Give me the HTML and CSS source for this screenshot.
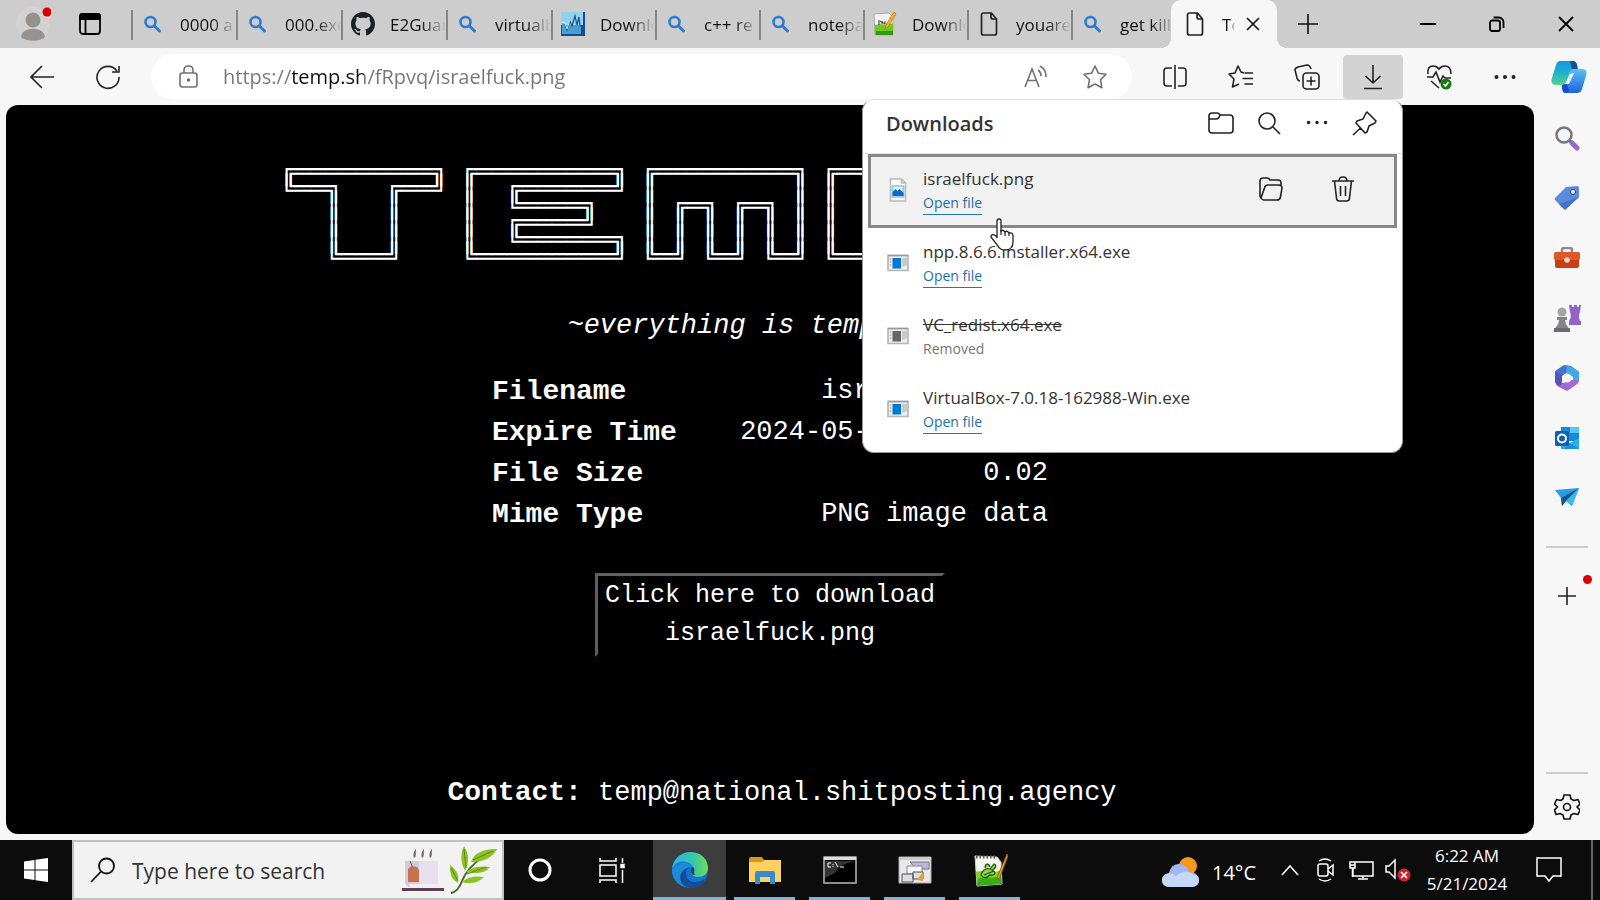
FILE: index.html
```html
<!DOCTYPE html>
<html lang="en">
<head>
    <meta charset="UTF-8">
    <title>Temp.sh</title>
    <link rel="stylesheet" href="styles.css">
</head>
<body>
    <!-- shared icons -->
    <svg class="sprite" aria-hidden="true">
        <symbol id="find" viewBox="0 0 24 24"><circle cx="9.500" cy="10" r="5" fill="none" stroke="#2b7cd0" stroke-width="2.600"/><path d="M13.500 14l5 5" stroke="#2b7cd0" stroke-width="3" stroke-linecap="round"/></symbol>
        <symbol id="doc" viewBox="0 0 24 24"><path d="M5.500 1h8l5 6v14a2 2 0 0 1-2 2h-11a2 2 0 0 1-2-2V3a2 2 0 0 1 2-2zM13 1v4a2 2 0 0 0 2 2h4" transform="translate(1)" fill="none" stroke="#222" stroke-width="1.700"/></symbol>
        <symbol id="exe" viewBox="0 0 22 18"><path d="M1 1.500h20v15H1z" fill="#eee" stroke="#b5b5b5"/><path d="M1 1.500h20" stroke="#999" stroke-width="1.500"/><path d="M5.500 4h8.500v10.500H5.500z" fill="currentColor"/><path d="M15 4h5v7l-5 2z" fill="#c9c9c9"/><path d="M2.500 5h2M2.500 8h2M2.500 11h2" stroke="#bbb"/></symbol>
        <symbol id="npp" viewBox="0 0 36 36"><path d="M3 4l22 1 4 5 1 22-25 2z" fill="#f5f8ef" stroke="#ccc"/><path d="M4 20c8-3 14 3 25-2l1 14-25 2z" fill="#7ed321"/><path d="M6 27c8-4 13 1 23-3l1 8-25 2z" fill="#3bab1c"/><path d="M4 5h21" stroke="#555" stroke-width="3" stroke-dasharray="1.500 2"/><path d="M9 23c2-6 5-7 9-6l4-5c3 1 2 5-2 6 5 2 3 6-2 5-4 4-7 3-9 0zM13 16c0-5 4-5 5-1M12 23l10-4" fill="#95cf39" stroke="#19501c" stroke-width="1.200"/><path d="M35 2l1 2-8 21-3 3 1-5z" fill="#e79a23" stroke="#8a5a20" stroke-width=".8"/></symbol>
    </svg>

    <header class="tab-strip">
        <button class="profile" aria-label="Profile">
            <svg width="36" height="36" viewBox="0 0 36 36"><circle cx="18" cy="18" r="17" fill="#d3d2d0"/><circle cx="18" cy="14" r="7.500" fill="#96928f"/><path d="M6 31c1-11 23-11 24 0-5 5-19 5-24 0z" fill="#96928f"/><circle cx="32" cy="6" r="4.500" fill="#d90000"/></svg>
        </button>
        <button class="workspace" aria-label="Tab actions">
            <svg width="24" height="24" viewBox="0 0 24 24" fill="none" stroke="#000" stroke-width="1.800"><rect x="2" y="2" width="20" height="20" rx="3"/><path d="M2 7V4q0-2 2-2h16q2 0 2 2v3z" fill="#000"/><path d="M7.500 7v15"/></svg>
        </button>
        <nav class="tabs" aria-label="Tabs">
            <button class="tab wide"><svg class="favicon"><use href="#find"/></svg><span>0000 a</span></button>
            <button class="tab wide"><svg class="favicon"><use href="#find"/></svg><span>000.exe</span></button>
            <button class="tab wide"><svg class="favicon" viewBox="0 0 16 16"><path fill="#1b1f23" d="M8 0C3.580 0 0 3.580 0 8c0 3.540 2.290 6.530 5.470 7.590.4.070.55-.17.55-.38 0-.19-.01-.82-.01-1.490-2.010.37-2.530-.49-2.690-.94-.09-.23-.48-.94-.82-1.130-.28-.15-.68-.52-.01-.53.63-.01 1.080.58 1.230.82.72 1.210 1.870.87 2.330.66.07-.52.28-.87.51-1.070-1.780-.2-3.640-.89-3.640-3.950 0-.87.31-1.590.82-2.150-.08-.2-.36-1.020.08-2.120 0 0 .67-.21 2.200.82.64-.18 1.320-.27 2-.27s1.360.09 2 .27c1.530-1.040 2.200-.82 2.200-.82.44 1.100.16 1.920.08 2.120.51.56.82 1.270.82 2.150 0 3.070-1.870 3.750-3.650 3.950.29.25.54.73.54 1.480 0 1.070-.01 1.930-.01 2.200 0 .21.15.46.55.38A8 8 0 0 0 16 8c0-4.420-3.580-8-8-8z"/></svg><span>E2Guar</span></button>
            <button class="tab wide"><svg class="favicon"><use href="#find"/></svg><span>virtualb</span></button>
            <button class="tab"><svg class="favicon" viewBox="0 0 24 24"><path fill="#174d8d" d="M0 0h24v24H0z"/><path fill="#8fd3ec" d="M0 0h22v13H0z"/><path fill="#46a0d6" d="M1 13h19v9H1z"/><path d="M1 12h3l2 6 3-9 2 5 3-10 2 9 2-8 1 9h4" fill="none" stroke="#1c5582" stroke-width="1.200"/><path d="M1 11h3l2 6 3-9" fill="none" stroke="#eaffff" stroke-width=".8"/></svg><span>Downlo</span></button>
            <button class="tab"><svg class="favicon"><use href="#find"/></svg><span>c++ re</span></button>
            <button class="tab"><svg class="favicon"><use href="#find"/></svg><span>notepad</span></button>
            <button class="tab"><svg class="favicon" viewBox="0 0 24 24"><path d="M1 2l15-1 4 4v18H2z" fill="#f5f7ef" stroke="#aaa"/><path d="M2 13c6-2 10 1 18-2v12H2z" fill="#72c91e"/><path d="M3 19h17v4H3z" fill="#35981d"/><path d="M6 8v5M9 9v3M12 9v3M7 9l5 3" stroke="#333"/><path d="M21 0l2 2-8 13-3 2 1-4z" fill="#efb62c" stroke="#bf6f29" stroke-width=".8"/></svg><span>Downlo</span></button>
            <button class="tab"><svg class="favicon"><use href="#doc"/></svg><span>youare</span></button>
            <button class="tab"><svg class="favicon"><use href="#find"/></svg><span>get kill</span></button>
            <div class="tab active">
                <svg class="favicon"><use href="#doc"/></svg><span>Te</span>
                <button class="close-tab" aria-label="Close tab"><svg width="14" height="14" viewBox="0 0 14 14" stroke="#111" stroke-width="1.600"><path d="M1 1l12 12M13 1L1 13"/></svg></button>
            </div>
        </nav>
        <button class="new-tab" aria-label="New tab"><svg width="22" height="22" viewBox="0 0 22 22" stroke="#111" stroke-width="1.600"><path d="M11 1v20M1 11h20"/></svg></button>
        <div class="window-controls">
            <button aria-label="Minimize"><svg width="16" height="16" viewBox="0 0 16 16" stroke="#000" stroke-width="2"><path d="M0 8h16"/></svg></button>
            <button aria-label="Restore"><svg width="16" height="16" viewBox="0 0 16 16" fill="none" stroke="#000" stroke-width="1.800"><rect x="1" y="4.500" width="10" height="10.500" rx="2"/><path d="M4.500 1.500H10a5 5 0 0 1 4.500 5V12"/></svg></button>
            <button aria-label="Close"><svg width="16" height="16" viewBox="0 0 16 16" stroke="#000" stroke-width="1.800"><path d="M1 1l14 14M15 1L1 15"/></svg></button>
        </div>
    </header>

    <div class="toolbar">
        <button class="tool" aria-label="Back"><svg width="24" height="24" viewBox="0 0 24 24"><path d="M24 12H1M12 1L1 12l11 11"/></svg></button>
        <button class="tool" aria-label="Refresh"><svg width="26" height="26" viewBox="0 0 26 26"><path d="M22 7A11 11 0 1 0 24 13M24 2v6h-7"/></svg></button>
        <div class="address-bar">
            <svg class="lock" width="20" height="24" viewBox="0 0 20 24"><rect x="1" y="8" width="17" height="14" rx="2.500"/><path d="M5 8V5q0-4 4.500-4T14 5v3"/><circle cx="9.500" cy="15" r="1" fill="#666"/></svg>
            <input class="url" type="text" aria-label="Address" value="https://temp.sh/fRpvq/israelfuck.png">
            <button aria-label="Read aloud"><svg width="24" height="24" viewBox="0 0 24 24"><path d="M1 22L8 4l7 18M3.500 15.500h9M14 5q3 2 3 6M16 1q6 3 6 11"/></svg></button>
            <button aria-label="Add to favorites"><svg width="26" height="26" viewBox="0 0 26 26"><path d="M13 2l3.400 7.200 7.600 1-5.500 5.500 1.400 8L13 20l-6.900 3.700 1.400-8L2 10.200l7.600-1z" stroke-linejoin="round"/></svg></button>
        </div>
        <button class="tool" aria-label="Split screen"><svg width="24" height="24" viewBox="0 0 24 24"><path d="M12 0v24M9 3H4Q1 3 1 6v12q0 3 3 3h5M15 3h5q3 0 3 3v12q0 3-3 3h-5"/></svg></button>
        <button class="tool" aria-label="Favorites"><svg width="26" height="26" viewBox="0 0 26 26"><path d="M16 9l-3-1-3-6-3 7-6 1 5 5-1.500 8L11 20M16.500 9H25M14.500 14.500H25M16.500 20H25" stroke-linejoin="round"/></svg></button>
        <button class="tool" aria-label="Collections"><svg width="26" height="26" viewBox="0 0 26 26"><rect x="9" y="9" width="16" height="16" rx="3.500"/><path d="M17 12.500v9M12.500 17h9M6 17q-2 0-3-3L1 6q0-2 3-3l9-2q3 0 4 4"/></svg></button>
        <div class="downloads">
            <button class="downloads-button" aria-label="Downloads"><svg width="20" height="26" viewBox="0 0 20 26"><path d="M10 1v18M2.500 12l7.500 7 7.500-7M1 24.500h18"/></svg></button>

            <section class="popup">
                <div class="popup-header">
                    <h2>Downloads</h2>
                    <button aria-label="Open downloads folder"><svg width="26" height="24" viewBox="0 0 26 24"><path d="M1 19V5q0-3 3-3h5q2 0 3 2h10q3 0 3 3v12q0 3-3 3H4q-3 0-3-3zM1 8h7q3 0 4-4"/></svg></button>
                    <button aria-label="Search downloads"><svg width="24" height="24" viewBox="0 0 24 24"><circle cx="10" cy="10" r="8"/><path d="M16 16l7 7"/></svg></button>
                    <button aria-label="More options"><svg width="24" height="24" viewBox="0 0 24 24"><path d="M3.500 11.500h.01M12 11.500h.01M20.500 11.500h.01" stroke-width="3.500" stroke-linecap="round"/></svg></button>
                    <button aria-label="Pin"><svg width="26" height="26" viewBox="0 0 26 26"><path d="M15 2l9 9-1 2-6 3-2 6-2 1L4 13l1-2 6-2 3-6zM8.500 18L1 25" stroke-linejoin="round"/></svg></button>
                </div>
                <ul class="file-list">
                    <li class="file selected">
                        <svg class="file-icon" width="22" height="24" viewBox="0 0 22 24"><path d="M3.500 1h11l4 4v18h-15z" fill="#fafafa" stroke="#bbb"/><path d="M14.500 1v4h4" fill="none" stroke="#bbb"/><path d="M5.500 8h11v11h-11z" fill="#dff3ff" stroke="#8bc5e8"/><path d="M5.500 18v-4l3-3 2 2 2-2 4 4v3z" fill="#0b6bc6"/></svg>
                        <div class="file-text"><span class="name">israelfuck.png</span><a href="#">Open file</a></div>
                        <button aria-label="Show in folder"><svg width="26" height="26" viewBox="0 0 26 26"><path d="M3 22Q2 21 2 20V5q0-3 3-3h4q2 0 3 2h8q3 0 3 3v2M3 22q1 2 3 2h13q3 0 3.500-3L24 12q0-3-3-3H10Q7 9 6.500 12z"/></svg></button>
                        <button aria-label="Delete file"><svg width="24" height="26" viewBox="0 0 24 26"><path d="M1 5h22M8 5q0-4 4-4t4 4M3.500 5l2 17q0 3 3 3h7q3 0 3-3l2-17M9.500 10v10M14.500 10v10"/></svg></button>
                    </li>
                    <li class="file">
                        <svg class="file-icon" width="22" height="18"><use href="#exe"/></svg>
                        <div class="file-text"><span class="name">npp.8.6.6.Installer.x64.exe</span><a href="#">Open file</a></div>
                    </li>
                    <li class="file removed">
                        <svg class="file-icon" width="22" height="18"><use href="#exe"/></svg>
                        <div class="file-text"><span class="name">VC_redist.x64.exe</span><span class="state">Removed</span></div>
                    </li>
                    <li class="file">
                        <svg class="file-icon" width="22" height="18"><use href="#exe"/></svg>
                        <div class="file-text"><span class="name">VirtualBox-7.0.18-162988-Win.exe</span><a href="#">Open file</a></div>
                    </li>
                </ul>
                <svg class="cursor" width="26" height="34" viewBox="0 0 26 34"><path d="M8 20V3q0-2 2-2t2 2v10q2-2 4 1 2-2 4 1 4-1 4 3v6q0 8-8 8-5 0-7-4l-7-9q0-4 5-1z" fill="#fff" stroke="#222" stroke-width="1.300"/><path d="M12 12v5M16 13v5M20 14v4" stroke="#222" stroke-width="1.200"/></svg>
            </section>
        </div>
        <button class="tool" aria-label="Browser essentials"><svg width="26" height="26" viewBox="0 0 26 26"><path d="M2 10Q1 2 7 2q4 0 6 3 2-3 6-3 6 0 6 8M1 13h6l3-5 4 10 3-6 2 2h6M5 17l8 7"/><circle cx="20" cy="20" r="5.500" fill="#107c10" stroke="none"/><path d="M17.500 20l2 2 3-4" stroke="#fff"/></svg></button>
        <button class="tool" aria-label="Settings and more"><svg width="24" height="24" viewBox="0 0 24 24"><path d="M3.500 12h.01M12 12h.01M20.500 12h.01" stroke-width="4" stroke-linecap="round"/></svg></button>
        <button class="copilot" aria-label="Copilot">
            <svg width="36" height="34" viewBox="0 0 36 34"><defs><linearGradient id="cp1" x2="0" y2="1"><stop stop-color="#1496dd"/><stop offset=".5" stop-color="#19b3cf"/><stop offset="1" stop-color="#5fd18c"/></linearGradient><linearGradient id="cp2" x2="0" y2="1"><stop stop-color="#5cc0f6"/><stop offset="1" stop-color="#1e63e0"/></linearGradient></defs><path d="M9 1h13q3 0 4 4l1 5h-5q-3 0-4 4l-3 9q-1 2-4 2H5q-6 0-4-7L5 5q1-4 4-4z" fill="url(#cp1)"/><path d="M19 1h3q3 0 4 4l1 5h-6z" fill="#174f93"/><path d="M27 9h4q6 0 4 7l-4 13q-1 4-5 4H14q-3 0-3-8 3 0 4-2l4-12q1-2 3-2z" fill="url(#cp2)"/><path d="M11 25q3 0 4-2l3 7q-1 3-4 3-3-1-3-8z" fill="#1b48cf"/><path d="M19 14l4-1-5 11h-4z" fill="#f2fbff"/></svg>
        </button>
    </div>

    <div class="content">
        <main class="page">
<pre class="wordmark" aria-label="TEMP">
╔═════════╗ ╔═════════╗ ╔═════════╗ ╔═════════╗
╚══╗   ╔══╝ ║  ╔══════╝ ║         ║ ║  ╔═══╗  ║
   ║   ║    ║  ╚════╗   ║ ╔═╗ ╔═╗ ║ ║  ╚═══╝  ║
   ║   ║    ║  ╔════╝   ║ ║ ║ ║ ║ ║ ║  ╔══════╝
   ║   ║    ║  ╚══════╗ ║ ║ ║ ║ ║ ║ ║  ║
   ╚═══╝    ╚═════════╝ ╚═╝ ╚═╝ ╚═╝ ╚══╝
</pre>
            <p class="tagline">~everything is temporary~</p>
            <table class="info">
                <tr><th scope="row">Filename</th><td>israelfuck.png</td></tr>
                <tr><th scope="row">Expire Time</th><td>2024-05-24 13:22:00</td></tr>
                <tr><th scope="row">File Size</th><td>0.02</td></tr>
                <tr><th scope="row">Mime Type</th><td>PNG image data</td></tr>
            </table>
            <button class="download">Click here to download<br>israelfuck.png</button>
            <p class="contact"><b>Contact:</b> temp@national.shitposting.agency</p>
        </main>

        <aside class="sidebar">
            <button aria-label="Search"><svg width="26" height="26" viewBox="0 0 26 26"><circle cx="10" cy="10" r="7.500" fill="#f2f5f6" stroke="#77777a" stroke-width="2.500"/><path d="M15.500 15.500l3 3" stroke="#777" stroke-width="3"/><path d="M18 18l5 5" stroke="#9268cb" stroke-width="5" stroke-linecap="round"/></svg></button>
            <button aria-label="Shopping"><svg width="26" height="26" viewBox="0 0 26 26"><path d="M12 2l11-1q2 0 2 2v9L12 24q-1 1-2 0l-9-9q-1-1 0-2z" fill="#5b8ade"/><path d="M25 12L12 24q-1 1-2 0l-5-5z" fill="#456fd0"/><circle cx="19" cy="7" r="2.600" fill="#eef" stroke="#234d8f"/></svg></button>
            <button aria-label="Tools"><svg width="28" height="22" viewBox="0 0 28 22"><path d="M9 6V3q0-2 2-2h6q2 0 2 2v3" fill="none" stroke="#8b8b8d" stroke-width="2.500"/><rect x="1" y="5" width="26" height="8" rx="1.500" fill="#df5726"/><path d="M2 13h24v6q0 2-2 2H4q-2 0-2-2z" fill="#c73f13"/><circle cx="14" cy="13" r="2.800" fill="#f5d6c9"/></svg></button>
            <button aria-label="Games"><svg width="28" height="28" viewBox="0 0 28 28"><path d="M16 1h3v2h2V1h3v2h2V1h2l-1 7q-2 3 0 9h1v4H16v-4q3-4 1-9z" fill="#9463c9"/><circle cx="9" cy="8" r="4.500" fill="#a5a5a7"/><path d="M4 13h10v3h-2q0 4 3 7 3 4 2 5H1q-1-2 2-5 3-3 3-7H4z" fill="#858587"/><path d="M1 24h16v4H1z" fill="#6b6b6e"/></svg></button>
            <button aria-label="Microsoft 365"><svg width="26" height="28" viewBox="0 0 26 28"><path d="M10 1l7 1 8 6v9l-5 3-1-8-6-3-5 3-2 9-5-4V7z" fill="#4d70cf"/><path d="M13 1l11 6q2 5 1 10l-6 2v-6l-7-4z" fill="#40a8e6"/><path d="M1 17l8 2 9-3 7 0q0 3-3 5l-9 6-8-4q-4-2-4-6z" fill="#a16bd2"/><path d="M1 8l7 3v8l-2 3q-5-2-5-6z" fill="#5656b9"/><circle cx="13" cy="14" r="4.500" fill="#f7f7f7"/></svg></button>
            <button aria-label="Outlook"><svg width="26" height="24" viewBox="0 0 26 24"><path d="M7 1h18v14H7z" fill="#1689d8"/><path d="M16 1h9v6h-9z" fill="#50c7f5"/><path d="M7 12l9 5 9-5v11H7z" fill="#2cafe8"/><path d="M16 17l9 6H10z" fill="#1491db"/><rect x="1" y="5" width="14" height="15" rx="1.500" fill="#0f5fb5"/><circle cx="8" cy="12.500" r="4" fill="none" stroke="#fff" stroke-width="2"/></svg></button>
            <button aria-label="Drop"><svg width="26" height="22" viewBox="0 0 26 22"><path d="M1 3l24-2-7 18-6-5-4 5-1-8z" fill="#25a0e5"/><path d="M7 11L25 1 12 14l-4 5z" fill="#14578e"/><path d="M12 14L25 1l-7 18z" fill="#3cb7ef"/></svg></button>
            <button class="add" aria-label="Customize"><svg width="20" height="20" viewBox="0 0 20 20" stroke="#222" stroke-width="1.600"><path d="M10 1v18M1 10h18"/></svg><i class="dot"></i></button>
            <button class="settings" aria-label="Settings"><svg width="26" height="28" viewBox="0 0 26 28" fill="none" stroke="#111" stroke-width="1.600" stroke-linejoin="round"><path d="M10 2h6l1 4 3 1.500 4-1 2 4.500-3 3 3 3-2 4.500-4-1-3 1.500-1 4h-6l-1-4-3-1.500-4 1L0.500 17l3-3-3-3L2.500 6.500l4 1L9 6z"/><circle cx="13" cy="14" r="3.500"/></svg></button>
        </aside>
    </div>

    <footer class="taskbar">
        <button class="start" aria-label="Start"><svg width="24" height="24" viewBox="0 0 24 24" fill="#fff"><path d="M0 3.500l10.500-1.500v9.500H0zM11.500 1.800L24 0v11.500H11.500zM0 12.500h10.500V22L0 20.500zM11.500 12.500H24V24l-12.500-1.800z"/></svg></button>
        <div class="search-box">
            <svg width="26" height="26" viewBox="0 0 26 26" fill="none" stroke="#111" stroke-width="1.800"><circle cx="16.500" cy="9" r="7.500"/><path d="M11 14.500L1 25"/></svg>
            <input type="text" aria-label="Search" placeholder="Type here to search">
            <svg class="art" width="96" height="52" viewBox="0 0 96 52"><path d="M12 14q-2-5 2-9v5q0 3-2 4zM20 14q-2-5 2-9v5q0 3-2 4zM28 14q-2-5 2-9v5q0 3-2 4z" fill="#777"/><path d="M3 17h33v21q0 5-5 5H10q-7 0-7-5z" fill="#e8dfee"/><path d="M3 17h14v26h-7q-7 0-7-5z" fill="#d3cadb"/><path d="M8 17l3 7" stroke="#754c3d"/><path d="M6 25l3-3 6 1 2 3v12H6z" fill="#c5734e"/><path d="M6 40h30l-3 4H10z" fill="#f3edf7"/><path d="M0 44h42v3H0z" fill="#5c4250"/><path d="M49 49q7-1 11-12 5-13 22-25" fill="none" stroke="#4b6925" stroke-width="2"/><path d="M62 2q8 12 1 25-7-13-1-25zM69 18q4-13 26-13-7 13-26 13zM48 21q10 6 8 18-9-4-8-18zM64 28q8-7 24-5-7 9-24 5zM60 38q8-7 22-5-9 9-22 5z" fill="#8cc322"/><path d="M62 5l2 19M71 16l20-9M49 24l7 13M65 30l19-7" stroke="#5d8f22" stroke-width="1.200"/></svg>
        </div>
        <button class="plain" aria-label="Cortana"><svg width="26" height="26" viewBox="0 0 26 26" fill="none" stroke="#fff" stroke-width="3"><circle cx="13" cy="13" r="10"/></svg></button>
        <button class="plain" aria-label="Task view"><svg width="26" height="26" viewBox="0 0 26 26" fill="none" stroke="#fff" stroke-width="1.500"><path d="M1 8h16v11H1zM1 1v3h16V1M1 26v-3h16v3M23.500 1v5M23.500 13v13"/><path d="M22 7.500h3v3h-3z" fill="#fff"/></svg></button>
        <button class="app current" aria-label="Edge"><svg width="36" height="36" viewBox="0 0 36 36"><defs><linearGradient id="e1"><stop stop-color="#2bb6e6"/><stop offset=".6" stop-color="#35c9a6"/><stop offset="1" stop-color="#70dc57"/></linearGradient></defs><circle cx="18" cy="18" r="18" fill="#1473cf"/><path d="M0 17C2 3 14 0 18 0c13 0 18 9 18 16 0 6-5 9-10 9-7 0-5-4-4-6 0-10-16-14-22-2z" fill="url(#e1)"/><path d="M0 18C4 9 18 8 21 15c-11-1-13 15-3 20C8 36 0 28 0 18z" fill="#1c8bd9"/><path d="M14 20c0 13 12 11 19 7-7 13-21 10-24 3-3-8 3-14 9-15-3 2-4 3-4 5z" fill="#124d9c"/><path d="M21 15c3 3 0 5 2 8-3 1-6-6-2-8z" fill="#3d3d3d"/></svg></button>
        <button class="app" aria-label="File Explorer"><svg width="32" height="28" viewBox="0 0 32 28"><path d="M0 3q0-2 2-2h11l2 3h15q2 0 2 2v6H0z" fill="#d9951e"/><path d="M0 6h13l3-2h16v22H0z" fill="#fbd260"/><path d="M6 28V17q0-2 2-2h16q2 0 2 2v11h-5v-7H11v7z" fill="#388bd0"/></svg></button>
        <button class="app" aria-label="Command Prompt"><svg width="34" height="28" viewBox="0 0 34 28"><path d="M1 1h32v26H1z" fill="#000" stroke="#bbb" stroke-width="1.500"/><path d="M1 1h32v3H1z" fill="#ddd"/><path d="M2 5h30Q16 8 12 17L2 22z" fill="#333"/><path d="M8 7H5v4h3M10 8v1M10 10v1M12 6l3 5M17 11h4" fill="none" stroke="#fff"/></svg></button>
        <button class="app" aria-label="Windows Features"><svg width="34" height="28" viewBox="0 0 34 28"><path d="M1 1h32v26H1z" fill="#e8e8eb" stroke="#aaa"/><path d="M1 1h32v3H1z" fill="#ccc"/><path d="M12 6h19v7H18z" fill="#bbb8df" stroke="#777"/><path d="M9 10h15v8H9z" fill="#f7f7f9" stroke="#888"/><path d="M4 18h11v8H4zM15 16h10v7H15z" fill="#ddd" stroke="#555"/><path d="M19 24l6-8v9z" fill="#e5a13b"/></svg></button>
        <button class="app" aria-label="Notepad++"><svg width="36" height="36"><use href="#npp"/></svg></button>

        <div class="tray">
            <button class="weather"><svg width="38" height="32" viewBox="0 0 38 32"><circle cx="26" cy="10" r="9" fill="#f7981d"/><path d="M8 31q-8 0-8-7 0-6 7-7Q9 8 17 8q7 0 10 8 9 0 10 8 0 7-8 7z" fill="#9fb9ef"/><path d="M8 31q-8 0-8-7 0-5 6-6 4-2 8 2 10-8 16-2 7 1 7 6 0 7-8 7z" fill="#c6d7fa"/></svg>14°C</button>
            <button class="icon-btn" aria-label="Show hidden icons"><svg width="18" height="12" viewBox="0 0 18 12"><path d="M1 11l8-9 8 9"/></svg></button>
            <button class="icon-btn" aria-label="Meet now"><svg width="18" height="24" viewBox="0 0 18 24"><rect x="1" y="6" width="10" height="12" rx="2"/><path d="M11 11l5-4v10l-5-4M2 3q6-4 12 0M2 21q6 4 12 0"/></svg></button>
            <button class="icon-btn" aria-label="Network"><svg width="26" height="22" viewBox="0 0 26 22"><path d="M6 3h18v14H4V9M9 20h10M14 17v3M1 3h5v6H1zM3.500 9v9M1 6h5"/></svg></button>
            <button class="icon-btn" aria-label="Volume"><svg width="26" height="24" viewBox="0 0 26 24"><path d="M1 8h3l6-6v18l-6-6H1z"/><circle cx="19" cy="17" r="6.500" fill="#d0212f" stroke="none"/><path d="M16 14l6 6M22 14l-6 6" stroke-width="1.600"/></svg></button>
            <div class="clock"><span>6:22 AM</span><span>5/21/2024</span></div>
            <button class="icon-btn notify" aria-label="Notifications"><svg width="26" height="26" viewBox="0 0 26 26"><path d="M1 1h24v18h-8l-4 5-4-5H1z"/></svg></button>
        </div>
    </footer>
</body>
</html>
```
FILE: styles.css
```css
* {
    box-sizing: border-box;
}
body {
    margin: 0;
    height: 100vh;
    display: flex;
    flex-direction: column;
    overflow: hidden;
    background: #f7f7f7;
    color: #111;
    font-family: "Open Sans", "Noto Sans", sans-serif;
    font-size: 16px;
}
button {
    display: flex;
    align-items: center;
    justify-content: center;
    padding: 0;
    border: none;
    background: none;
    color: inherit;
    font: inherit;
    flex: none;
}
svg {
    flex: none;
}
.sprite {
    position: absolute;
    width: 0;
    height: 0;
}

/* tabs */
.tab-strip {
    display: flex;
    height: 48px;
    background: #cdcdcd;
}
.profile {
    width: 66px;
}
.workspace {
    width: 48px;
    margin-right: 17px;
}
.tabs {
    display: flex;
    min-width: 0;
}
.tab {
    position: relative;
    display: flex;
    align-items: center;
    justify-content: flex-start;
    width: 104px;
    padding-left: 10px;
    font-size: 17px;
}
.tab.wide {
    width: 105px;
}
.tab:not(.active)::before {
    content: "";
    position: absolute;
    left: 0;
    top: 10px;
    width: 2px;
    height: 30px;
    background: #858585;
}
.favicon {
    width: 24px;
    height: 24px;
    margin-right: 15px;
}
.tab span {
    flex: 1;
    overflow: hidden;
    white-space: nowrap;
    text-align: left;
    -webkit-mask-image: linear-gradient(90deg, #000 55%, transparent);
    mask-image: linear-gradient(90deg, #000 55%, transparent);
}
.tab.active {
    width: 106px;
    margin-left: -4px;
    padding: 0 6px 0 12px;
    background: #f7f7f7;
    border-radius: 10px 10px 0 0;
}
.tab.active::before,
.tab.active::after {
    content: "";
    position: absolute;
    bottom: 0;
    width: 10px;
    height: 10px;
}
.tab.active::before {
    right: 100%;
    background: radial-gradient(circle at 0 0, transparent 10px, #f7f7f7 10px);
}
.tab.active::after {
    left: 100%;
    background: radial-gradient(circle at 100% 0, transparent 10px, #f7f7f7 10px);
}
.tab.active .close-tab {
    width: 36px;
    height: 40px;
}
.new-tab {
    width: 62px;
}
.window-controls {
    display: flex;
    margin-left: auto;
}
.window-controls button {
    width: 69px;
}

/* toolbar */
.toolbar {
    display: flex;
    align-items: center;
    height: 57px;
    padding-left: 9px;
}
.toolbar svg {
    fill: none;
    stroke: #222;
    stroke-width: 1.6;
}
.toolbar .copilot svg,
.toolbar .file-icon {
    stroke: none;
}
.tool {
    width: 66px;
    height: 44px;
}
.address-bar {
    flex: 1;
    display: flex;
    align-items: center;
    height: 45px;
    margin: 0 10px;
    padding: 0 24px 0 28px;
    gap: 34px;
    border-radius: 23px;
    background: #fff;
}
.toolbar .address-bar svg {
    stroke: #707070;
}
.address-bar .lock {
    margin-right: -10px;
}
.url {
    flex: 1;
    min-width: 0;
    padding: 0;
    border: none;
    outline: none;
    font: inherit;
    font-size: 20px;
    /* host part is darker than the rest */
    background: linear-gradient(90deg, #767676 68px, #111 68px, #111 141px, #767676 141px);
    -webkit-background-clip: text;
    background-clip: text;
    -webkit-text-fill-color: transparent;
}
.downloads {
    position: relative;
    margin: 0 3px;
}
.downloads-button {
    width: 60px;
    height: 44px;
    border-radius: 4px;
    background: #d3d3d3;
}
.copilot {
    width: 62px;
}

/* downloads popup */
.popup {
    position: absolute;
    z-index: 2;
    top: 44px;
    right: 0;
    width: 541px;
    padding-bottom: 5px;
    border: 1px solid #999;
    border-top-color: #ddd;
    border-radius: 12px;
    background: #fff;
    color: #333;
}
.popup-header {
    display: flex;
    align-items: center;
    height: 54px;
    padding: 0 13px 6px 23px;
    border-bottom: 1px solid #e5e5e5;
}
.popup-header h2 {
    flex: 1;
    margin: 0;
    font-size: 20px;
    font-weight: 600;
}
.popup-header button {
    width: 48px;
    height: 40px;
}
.file-list {
    margin: 0;
    padding: 0 5px;
    list-style: none;
}
.file {
    display: flex;
    align-items: center;
    height: 73px;
    padding: 0 16px 0 19px;
}
.file.selected {
    height: 74px;
    padding: 0 15px 0 16px;
    border: 3px solid #888;
    background: #f1f1f1;
}
.file-icon {
    margin: 0 14px 2px 0;
    color: #0078d7;
}
.file-text {
    flex: 1;
    display: flex;
    flex-direction: column;
    align-items: flex-start;
    font-size: 17px;
    line-height: 24px;
}
.file-text a {
    border-bottom: 1px solid #2478ae;
    color: #1c6fa8;
    font-size: 14px;
    line-height: 23px;
    text-decoration: none;
}
.file button {
    width: 72px;
    height: 48px;
    margin-bottom: 3px;
}
.removed .name {
    text-decoration: line-through;
}
.removed .file-icon {
    color: #666;
}
.state {
    color: #767676;
    font-size: 14px;
}
.cursor {
    position: absolute;
    left: 126px;
    top: 118px;
}

/* web page */
.content {
    flex: 1;
    display: flex;
    min-height: 0;
}
.page {
    flex: 1;
    display: flex;
    flex-direction: column;
    align-items: center;
    margin: 0 0 6px 6px;
    padding-top: 58px;
    overflow: hidden;
    border-radius: 12px;
    background: #000;
    color: #fff;
    font-family: "Liberation Mono", monospace;
    font-size: 27px;
}
.wordmark {
    width: 65ch;
    margin: 0;
    font-size: 25px;
    line-height: 17px;
}
.tagline {
    margin: 41px 0 0;
    font-style: italic;
    line-height: 40px;
}
.info {
    width: 556px;
    margin-top: 25px;
    border-spacing: 0;
    line-height: 41px;
}
.info th {
    padding: 0;
    font-size: 28px;
    text-align: left;
}
.info td {
    padding: 0;
    text-align: right;
}
.download {
    display: block;
    margin-top: 38px;
    padding: 1px 7px;
    border: 3px outset #000;
    border-color: #5e5e5e #000 #000 #5e5e5e;
    font-size: 25px;
    line-height: 38px;
}
.contact {
    margin: 116px 0 0;
    padding-left: 24px;
    line-height: 40px;
}
.contact b {
    font-size: 28px;
}

/* right sidebar */
.sidebar {
    display: flex;
    flex-direction: column;
    width: 66px;
    padding-top: 3px;
}
.sidebar button {
    height: 60px;
}
.sidebar .add {
    position: relative;
    height: 98px;
    margin: 18px 12px 0;
    border-top: 2px solid #ccc;
}
.dot {
    position: absolute;
    top: 27px;
    right: -4px;
    width: 9px;
    height: 9px;
    border-radius: 50%;
    background: #d90000;
}
.sidebar .settings {
    height: 68px;
    margin: auto 12px 0;
    border-top: 2px solid #ccc;
}

/* taskbar */
.taskbar {
    display: flex;
    height: 60px;
    background: #0c0c0c;
    color: #fff;
}
.start {
    width: 72px;
}
.search-box {
    display: flex;
    align-items: center;
    width: 432px;
    padding: 0 4px 0 16px;
    border: 2px solid #c0c0c0;
    background: #f2f2f2;
}
.search-box input {
    flex: 1;
    min-width: 0;
    padding: 2px 0 0 16px;
    border: none;
    outline: none;
    background: none;
    font: inherit;
    font-size: 21px;
}
.search-box input::placeholder {
    color: #333;
}
.plain {
    width: 72px;
}
.plain + .app {
    margin-left: 5px;
}
.app {
    position: relative;
    width: 73px;
    margin-right: 2px;
}
.app::after {
    content: "";
    position: absolute;
    left: 6px;
    right: 6px;
    bottom: 0;
    height: 3px;
    background: #83b2d8;
}
.app.current {
    background: #3d3d3d;
}
.app.current::after {
    left: 0;
    right: 0;
}
.tray {
    display: flex;
    margin-left: auto;
    margin-right: 7px;
    border-right: 2px solid #666;
}
.weather {
    gap: 12px;
    margin-right: 16px;
    padding-top: 4px;
    font-size: 20px;
}
.icon-btn {
    width: 36px;
}
.icon-btn svg {
    fill: none;
    stroke: #fff;
    stroke-width: 1.5;
}
.clock {
    display: flex;
    flex-direction: column;
    justify-content: center;
    width: 92px;
    margin-left: 5px;
    font-size: 17px;
    line-height: 28px;
    text-align: center;
}
.notify {
    width: 72px;
    margin-right: 6px;
}
```
